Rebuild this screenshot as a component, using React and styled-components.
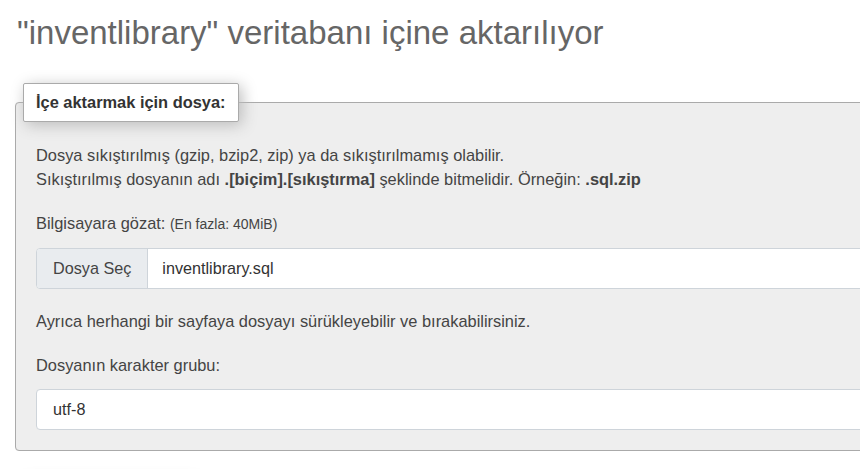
import React from "react"
import styled, { createGlobalStyle } from "styled-components"

const GlobalStyle = createGlobalStyle`
    html, body {
        margin: 0;
        padding: 0;
        background: #fff;
        overflow: hidden;
    }
    body {
        font-family: "Liberation Sans", Arial, sans-serif;
        color: #444;
    }
`

const Page = styled.div`
    width: 1000px;
    padding: 0 0 0 15px;
`

const Title = styled.h2`
    margin: 14px 0 0 2px;
    font-size: 33px;
    line-height: 38px;
    font-weight: 400;
    color: #666;
`

const Fieldset = styled.fieldset`
    margin: ${p => p.$top}px 0 0 0;
    padding: 0;
    min-width: 0;
    background: #eee;
    border: 1px solid #aaa;
    border-radius: 4px;
`

const Legend = styled.legend`
    margin-left: 7px;
    padding: 9px 12px;
    background: #fff;
    border: 1px solid #aaa;
    border-radius: 2px;
    box-shadow: 3px 3px 15px #bbb;
    font-size: 16.4px;
    line-height: 19px;
    font-weight: 700;
    color: #333;
`

const Body = styled.div`
    padding: 21px 20px 20px;
    display: flex;
    flex-direction: column;
    gap: 20px;
`

const Text = styled.div`
    font-size: 16.4px;
    line-height: 24px;
    color: #444;
`

const Small = styled.span`
    font-size: 14px;
`

const Field = styled.div`
    display: flex;
    flex-direction: column;
    gap: 12px;
`

const FileGroup = styled.label`
    display: flex;
    height: 41px;
    box-sizing: border-box;
    background: #fff;
    border: 1px solid #ced4da;
    border-radius: 4px;
    font-size: 16.2px;
    overflow: hidden;
`

const FileButton = styled.span`
    display: flex;
    align-items: center;
    padding: 0 16px;
    background: #e9ecef;
    border-right: 1px solid #ced4da;
    color: #444;
`

const FileName = styled.span`
    display: flex;
    align-items: center;
    padding: 0 14px;
    color: #333;
`

const Select = styled.div`
    display: flex;
    align-items: center;
    height: 41px;
    box-sizing: border-box;
    padding: 0 16px;
    background: #fff;
    border: 1px solid #ced4da;
    border-radius: 4px;
    font-size: 16.2px;
    color: #333;
`

const App = () => (
    <Page>
        <GlobalStyle />
        <Title>"inventlibrary" veritabanı içine aktarılıyor</Title>

        <Fieldset $top={31}>
            <Legend>İçe aktarmak için dosya:</Legend>
            <Body>
                <Text>
                    Dosya sıkıştırılmış (gzip, bzip2, zip) ya da sıkıştırılmamış olabilir.<br />
                    Sıkıştırılmış dosyanın adı <b>.[biçim].[sıkıştırma]</b> şeklinde bitmelidir. Örneğin: <b>.sql.zip</b>
                </Text>
                <Field>
                    <Text>Bilgisayara gözat: <Small>(En fazla: 40MiB)</Small></Text>
                    <FileGroup>
                        <FileButton>Dosya Seç</FileButton>
                        <FileName>inventlibrary.sql</FileName>
                    </FileGroup>
                </Field>
                <Text>Ayrıca herhangi bir sayfaya dosyayı sürükleyebilir ve bırakabilirsiniz.</Text>
                <Field>
                    <Text>Dosyanın karakter grubu:</Text>
                    <Select>utf-8</Select>
                </Field>
            </Body>
        </Fieldset>

        <Fieldset $top={28}>
            <Legend>Kısmi içe aktarma:</Legend>
            <Body />
        </Fieldset>
    </Page>
)

export default App
